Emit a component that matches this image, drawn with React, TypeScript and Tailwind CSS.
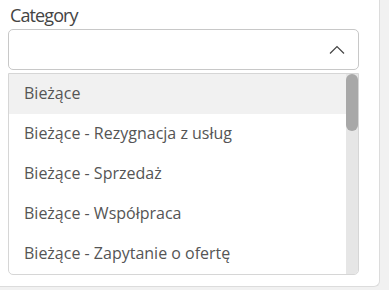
import React from "react";

const items = [
  "Bieżące",
  "Bieżące - Rezygnacja z usług",
  "Bieżące - Sprzedaż",
  "Bieżące - Współpraca",
  "Bieżące - Zapytanie o ofertę",
];

export default function App() {
  return (
    <div className="w-[389px] h-[290px] bg-[#f1f1f1] overflow-hidden" style={{ fontFamily: '"Open Sans", sans-serif' }}>
      <div className="w-[380px] h-[287px] bg-white border-r border-b border-[#dcdcdc] rounded-br-[6px] pl-[8px] pr-[20px]">
        <div className="pl-[2px] pt-[3px] h-[29px] text-[18px] leading-[24px] tracking-[-0.9px] text-[#444]">Category</div>
        <div className="h-[41px] border border-[#c8c8c8] rounded-[5px] flex items-center justify-end pr-[13px]">
          <svg width="16" height="9" viewBox="0 0 16 9" fill="none">
            <path d="M1 8.5 L8 1.5 L15 8.5" stroke="#444" strokeWidth="1.2" />
          </svg>
        </div>
        <div className="mt-[3px] h-[202px] border border-[#d6d6d6] rounded-b-[5px] flex overflow-hidden">
          <div className="flex-1 flex flex-col">
            {items.map((t, i) => (
              <div
                key={t}
                className={`h-[40px] shrink-0 flex items-center pl-[15px] pb-[3px] text-[16px] text-[#555] ${i === 0 ? "bg-[#f1f1f1]" : ""}`}
              >
                {t}
              </div>
            ))}
          </div>
          <div className="w-[12px] bg-[#e6e6e6] flex flex-col">
            <div className="h-[57px] bg-[#a8a8a8] rounded-full" />
          </div>
        </div>
      </div>
    </div>
  );
}
